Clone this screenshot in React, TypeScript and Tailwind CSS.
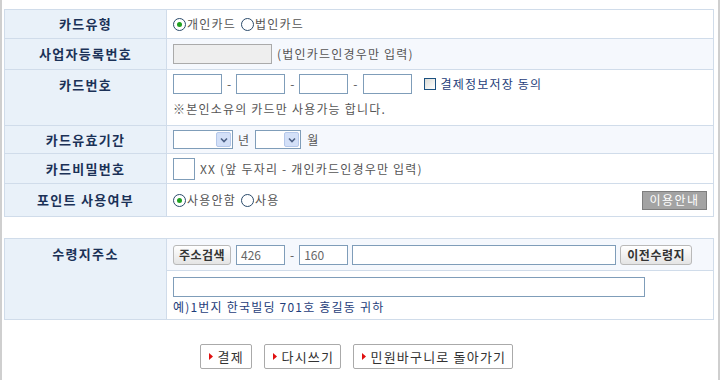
import React from "react";

const FONT = { fontFamily: '"Noto Sans CJK KR", "Noto Sans", sans-serif' };

function Radio({ checked }: { checked?: boolean }) {
  return (
    <span className="inline-flex h-[13px] w-[13px] items-center justify-center rounded-full border border-[#2a4a6a] bg-white align-middle">
      {checked && <span className="h-[5px] w-[5px] rounded-full bg-[#21a121]" />}
    </span>
  );
}

function Input({ w, value, gray }: { w: string; value?: string; gray?: boolean }) {
  return (
    <div
      className={
        "flex h-[20px] items-center border px-1 text-[12px] tracking-normal text-[#666] " +
        w +
        (gray ? " border-[#aaa] bg-[#eeeeee]" : " border-[#7f9db9] bg-white")
      }
    >
      {value}
    </div>
  );
}

function Dash() {
  return <span className="mx-[5px] tracking-normal">-</span>;
}

function Select({ w }: { w: string }) {
  return (
    <div className={"flex h-[19px] items-center justify-end border border-[#7f9db9] bg-white p-[1px] " + w}>
      <div className="flex h-full w-[15px] items-center justify-center rounded-[2px] border border-[#b5c8ea] bg-[#d3e0f8]">
        <svg width="8" height="6" viewBox="0 0 8 6">
          <path d="M1 1.5L4 4.5L7 1.5" stroke="#4d6185" strokeWidth="1.6" fill="none" />
        </svg>
      </div>
    </div>
  );
}

function Label({ children, top }: { children: React.ReactNode; top?: boolean }) {
  return (
    <td
      className={
        "w-[162px] border border-[#d0dcea] bg-[#e9f1f9] text-center text-[13px] font-bold tracking-[1.3px] text-[#1b3157] " +
        (top ? "align-top pt-[5px]" : "align-middle")
      }
    >
      {children}
    </td>
  );
}

function GrayBtn({ children, w }: { children: React.ReactNode; w: string }) {
  return (
    <div
      className={
        "flex h-[20px] items-center justify-center rounded-[3px] border border-[#b9b9b9] bg-gradient-to-b from-white to-[#e4e4e4] text-[12px] font-bold tracking-[0.5px] text-[#333] " +
        w
      }
    >
      {children}
    </div>
  );
}

function BottomBtn({ children, w }: { children: React.ReactNode; w: string }) {
  return (
    <div
      className={
        "flex h-[25px] items-center gap-[5px] rounded-[2px] border border-[#aaa] bg-white pl-[8px] text-[13px] tracking-[1.2px] text-[#333] " +
        w
      }
    >
      <svg width="4" height="7" viewBox="0 0 4 7">
        <path d="M0 0L4 3.5L0 7Z" fill="#e01010" />
      </svg>
      {children}
    </div>
  );
}

export default function App() {
  const cell = "border border-[#d0dcea] px-[6px] text-[12px] tracking-[1.2px] text-[#555]";
  return (
    <div style={FONT} className="h-[380px] w-[720px] overflow-hidden bg-white">
      <div className="h-full border-x-[2px] border-[#cfcfcf] px-[2px] pt-[9px]">
        <table className="w-[710px] border-collapse">
          <tbody>
            <tr className="h-[29px]">
              <Label>카드유형</Label>
              <td className={cell + " bg-white"}>
                <div className="flex items-center gap-[1px]">
                  <Radio checked />
                  <span>개인카드</span>
                  <span className="ml-[3px]" />
                  <Radio />
                  <span>법인카드</span>
                </div>
              </td>
            </tr>
            <tr className="h-[31px]">
              <Label>사업자등록번호</Label>
              <td className={cell + " bg-[#f5f8fd]"}>
                <div className="flex items-center gap-[5px]">
                  <Input w="w-[99px]" gray />
                  <span>(법인카드인경우만 입력)</span>
                </div>
              </td>
            </tr>
            <tr className="h-[56px]">
              <Label top>카드번호</Label>
              <td className={cell + " bg-white py-[4px] align-top"}>
                <div className="flex items-center">
                  <Input w="w-[49px]" />
                  <Dash />
                  <Input w="w-[49px]" />
                  <Dash />
                  <Input w="w-[49px]" />
                  <Dash />
                  <Input w="w-[49px]" />
                  <span className="ml-[12px] inline-block h-[12px] w-[12px] border border-[#1c5180] bg-gradient-to-br from-[#dcdcd6] to-white" />
                  <span className="ml-[5px] text-[#1e3d7a]">결제정보저장 동의</span>
                </div>
                <div className="mt-[6px]">※본인소유의 카드만 사용가능 합니다.</div>
              </td>
            </tr>
            <tr className="h-[28px]">
              <Label>카드유효기간</Label>
              <td className={cell + " bg-[#f5f8fd]"}>
                <div className="flex items-center">
                  <Select w="w-[60px]" />
                  <span className="mx-[5px]">년</span>
                  <Select w="w-[46px]" />
                  <span className="ml-[6px]">월</span>
                </div>
              </td>
            </tr>
            <tr className="h-[30px]">
              <Label>카드비밀번호</Label>
              <td className={cell + " bg-white"}>
                <div className="flex items-center gap-[5px]">
                  <div className="h-[22px] w-[22px] border border-[#7f9db9] bg-white" />
                  <span>XX (앞 두자리 - 개인카드인경우만 입력)</span>
                </div>
              </td>
            </tr>
            <tr className="h-[33px]">
              <Label>포인트 사용여부</Label>
              <td className={cell + " bg-white"}>
                <div className="flex items-center gap-[1px]">
                  <Radio checked />
                  <span>사용안함</span>
                  <span className="ml-[3px]" />
                  <Radio />
                  <span>사용</span>
                  <div className="ml-auto flex h-[19px] w-[65px] items-center justify-center border border-[#7e7e7e] bg-[#a3a3a3] text-[12px] tracking-[1.5px] text-white">
                    이용안내
                  </div>
                </div>
              </td>
            </tr>
          </tbody>
        </table>

        <table className="mt-[21px] w-[710px] border-collapse">
          <tbody>
            <tr className="h-[32px]">
              <td
                rowSpan={2}
                className="w-[162px] border border-[#d0dcea] bg-[#e9f1f9] pt-[5px] text-center align-top text-[13px] font-bold tracking-[1.3px] text-[#1b3157]"
              >
                수령지주소
              </td>
              <td className={cell + " bg-[#f5f8fd]"}>
                <div className="flex items-center">
                  <GrayBtn w="w-[58px]">주소검색</GrayBtn>
                  <div className="ml-[5px]" />
                  <Input w="w-[49px]" value="426" />
                  <Dash />
                  <Input w="w-[49px]" value="160" />
                  <div className="ml-[4px]" />
                  <Input w="w-[264px]" />
                  <div className="ml-[4px]" />
                  <GrayBtn w="w-[72px]">이전수령지</GrayBtn>
                </div>
              </td>
            </tr>
            <tr className="h-[49px]">
              <td className={cell + " bg-white align-top pt-[6px]"}>
                <Input w="w-[472px]" />
                <div className="mt-[1px] text-[#1e3d7a]">예)1번지 한국빌딩 701호 홍길동 귀하</div>
              </td>
            </tr>
          </tbody>
        </table>

        <div className="mt-[24px] flex justify-center gap-[12px] pr-[8px]">
          <BottomBtn w="w-[52px]">결제</BottomBtn>
          <BottomBtn w="w-[77px]">다시쓰기</BottomBtn>
          <BottomBtn w="w-[160px]">민원바구니로 돌아가기</BottomBtn>
        </div>
      </div>
    </div>
  );
}
